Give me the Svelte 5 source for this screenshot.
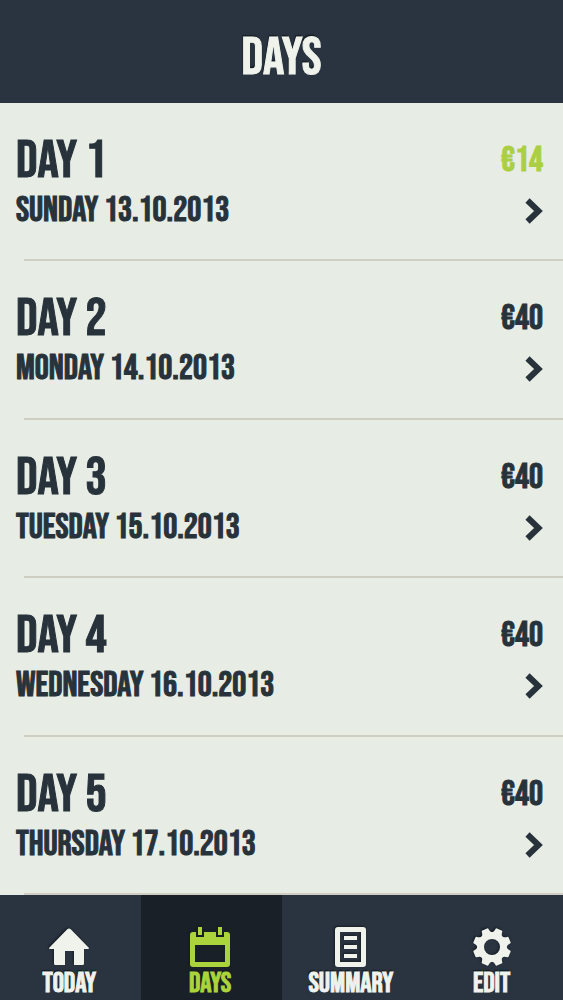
<script>
  const days = [
    { name: 'Day 1', date: 'Sunday 13.10.2013', amount: '€14', active: true },
    { name: 'Day 2', date: 'Monday 14.10.2013', amount: '€40' },
    { name: 'Day 3', date: 'Tuesday 15.10.2013', amount: '€40' },
    { name: 'Day 4', date: 'Wednesday 16.10.2013', amount: '€40' },
    { name: 'Day 5', date: 'Thursday 17.10.2013', amount: '€40' }
  ];
  const tabs = ['Today', 'Days', 'Summary', 'Edit'];
  const teeth = [22.5, 67.5, 112.5, 157.5, 202.5, 247.5, 292.5, 337.5];
  let current = $state('Days');
</script>

<div class="app">
  <header><h1>Days</h1></header>

  <main>
    {#each days as day}
      <button class="row">
        <span class="line">
          <span class="name">{day.name}</span>
          <span class="amount" class:active={day.active}>{day.amount}</span>
        </span>
        <span class="line">
          <span class="date">{day.date}</span>
          <svg class="chevron" viewBox="0 0 18 26" aria-hidden="true">
            <path d="M2.5 2.5 L13.5 13 L2.5 23.5" />
          </svg>
        </span>
      </button>
    {/each}
  </main>

  <nav>
    {#each tabs as tab}
      <button class="tab" class:current={current === tab} onclick={() => (current = tab)}>
        <svg class="icon" viewBox="0 0 42 42" aria-hidden="true">
          {#if tab === 'Today'}
            <path d="M21 2.5 Q22 2.5 23 3.5 L41 22 Q41 23 40 23 H36 V37.5 Q36 39 34.5 39 H26 V25 H17 V39 H7.5 Q6 39 6 37.5 V23 H2 Q1 23 1 22 L19 3.5 Q20 2.5 21 2.5 Z" />
          {:else if tab === 'Days'}
            <path fill-rule="evenodd" d="M4 6 H7 V11 H15 V6 H27 V11 H35 V6 H38 Q41 6 41 9 V38 Q41 41 38 41 H4 Q1 41 1 38 V9 Q1 6 4 6 Z M6 19 V36 H36 V19 Z" />
            <path d="M9 1 H13 V9 H9 Z M29 1 H33 V9 H29 Z" />
          {:else if tab === 'Summary'}
            <path fill-rule="evenodd" d="M8 1 H33 Q36 1 36 4 V38 Q36 41 33 41 H8 Q5 41 5 38 V4 Q5 1 8 1 Z M10 6 V36 H31 V6 Z" />
            <path d="M14 10 H27 V14 H14 Z M14 19 H27 V23 H14 Z M14 28 H27 V32 H14 Z" />
          {:else}
            <circle class="ring" cx="21" cy="21" r="11.5" />
            {#each teeth as angle}
              <path d="M13.5 9.5 Q17 7.5 17.5 2.5 Q17.5 2 18.5 2 H23.5 Q24.5 2 24.5 2.5 Q25 7.5 28.5 9.5 L24.5 12 H17.5 Z" transform="rotate({angle} 21 21)" />
            {/each}
          {/if}
        </svg>
        <span>{tab}</span>
      </button>
    {/each}
  </nav>
</div>

<style>
  :global(body) {
    margin: 0;
    background: #e7ece4;
  }
  .app {
    display: flex;
    flex-direction: column;
    min-height: 100vh;
    color: #27323b;
    font-family: 'Bebas Neue', 'Roboto Condensed', 'Liberation Sans Narrow', 'Liberation Sans', sans-serif;
    font-weight: 400;
    -webkit-text-stroke: 1px currentColor;
    text-transform: uppercase;
  }
  button {
    border: 0;
    padding: 0;
    background: none;
    color: inherit;
    font: inherit;
    text-transform: inherit;
    cursor: pointer;
  }
  header {
    display: flex;
    justify-content: center;
    padding: 30px 16px 17px;
    background: #2a3440;
    color: #eff3ec;
  }
  h1 {
    margin: 0;
    font-size: 53px;
    font-weight: inherit;
    line-height: 56px;
    text-shadow: -1px -2px 1px #151d22;
  }
  main {
    flex: 1;
    display: grid;
    grid-auto-rows: 1fr;
  }
  .row {
    display: flex;
    flex-direction: column;
    padding: 33px 20px 23px 16px;
    text-align: left;
    background: linear-gradient(#cecfc2, #cecfc2) 100% 100% / calc(100% - 24px) 2px no-repeat;
  }
  .line {
    display: flex;
    justify-content: space-between;
    align-items: center;
    align-self: stretch;
  }
  .name {
    font-size: 53px;
    line-height: 50px;
  }
  .date,
  .amount {
    font-size: 35px;
    line-height: 50px;
  }
  .amount.active {
    color: #abcf44;
  }
  .chevron {
    width: 18px;
    height: 26px;
    fill: none;
    stroke: currentColor;
    stroke-width: 6;
  }
  nav {
    display: grid;
    grid-template-columns: repeat(4, 1fr);
    background: #2a3440;
    color: #eff3ec;
  }
  .tab {
    display: flex;
    flex-direction: column;
    align-items: center;
    padding: 31px 2px 0 0;
    font-size: 28px;
    line-height: 32px;
    text-shadow: -1px -2px 1px #151d22;
  }
  .tab.current {
    background: #192027;
    color: #abd33c;
  }
  .icon {
    width: 42px;
    height: 42px;
    fill: currentColor;
    filter: drop-shadow(-1px -1px 1px #151d22);
  }
  .ring {
    fill: none;
    stroke: currentColor;
    stroke-width: 7;
  }
</style>
